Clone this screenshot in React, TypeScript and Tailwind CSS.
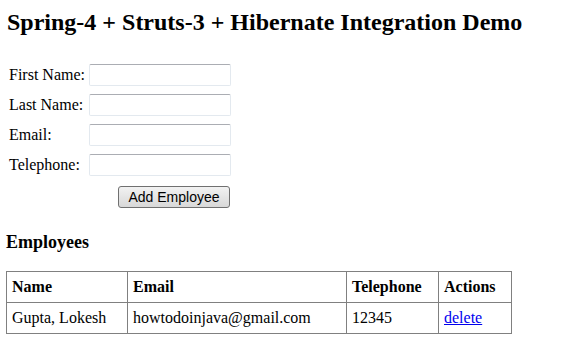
import React from "react";

const fields = ["First Name:", "Last Name:", "Email:", "Telephone:"];

export default function App() {
  return (
    <div className="w-[568px] h-[356px] bg-white text-black font-['Liberation_Serif',serif] overflow-hidden">
      <h2 className="pt-[8px] pl-[7px] text-[24px] leading-[28px] font-bold whitespace-nowrap">
        Spring-4 + Struts-3 + Hibernate Integration Demo
      </h2>
      <div className="mt-[28px] flex flex-col gap-[8px]">
        {fields.map((f) => (
          <div key={f} className="flex items-center h-[22px]">
            <span className="pl-[9px] w-[89px] text-[16px] leading-[18px] whitespace-nowrap">{f}</span>
            <input
              type="text"
              className="w-[142px] h-[22px] border border-[#e3e9ef] border-t-[#abadb3] rounded-[2px] bg-white outline-none"
            />
          </div>
        ))}
      </div>
      <div className="pl-[118px] mt-[9px]">
        <button className="w-[112px] h-[22px] border border-[#707070] rounded-[3px] bg-gradient-to-b from-[#f2f2f2] to-[#d8d8d8] font-['Liberation_Sans',sans-serif] text-[14px] leading-[16px] text-black">
          Add Employee
        </button>
      </div>
      <h3 className="mt-[22px] pl-[6px] text-[18px] leading-[22px] font-bold">Employees</h3>
      <table className="mt-[18px] ml-[6px] border-collapse border border-[#808080] text-[16px] leading-[18px]">
        <thead>
          <tr className="h-[31px]">
            <th className="w-[121px] border border-[#808080] text-left pl-[5px] font-bold">Name</th>
            <th className="w-[219px] border border-[#808080] text-left pl-[5px] font-bold">Email</th>
            <th className="w-[92px] border border-[#808080] text-left pl-[5px] font-bold">Telephone</th>
            <th className="w-[73px] border border-[#808080] text-left pl-[5px] font-bold">Actions</th>
          </tr>
        </thead>
        <tbody>
          <tr className="h-[31px]">
            <td className="border border-[#808080] pl-[5px]">Gupta, Lokesh</td>
            <td className="border border-[#808080] pl-[5px]">howtodoinjava@gmail.com</td>
            <td className="border border-[#808080] pl-[5px]">12345</td>
            <td className="border border-[#808080] pl-[5px]">
              <a href="#" className="text-[#0000ee] underline">delete</a>
            </td>
          </tr>
        </tbody>
      </table>
    </div>
  );
}
